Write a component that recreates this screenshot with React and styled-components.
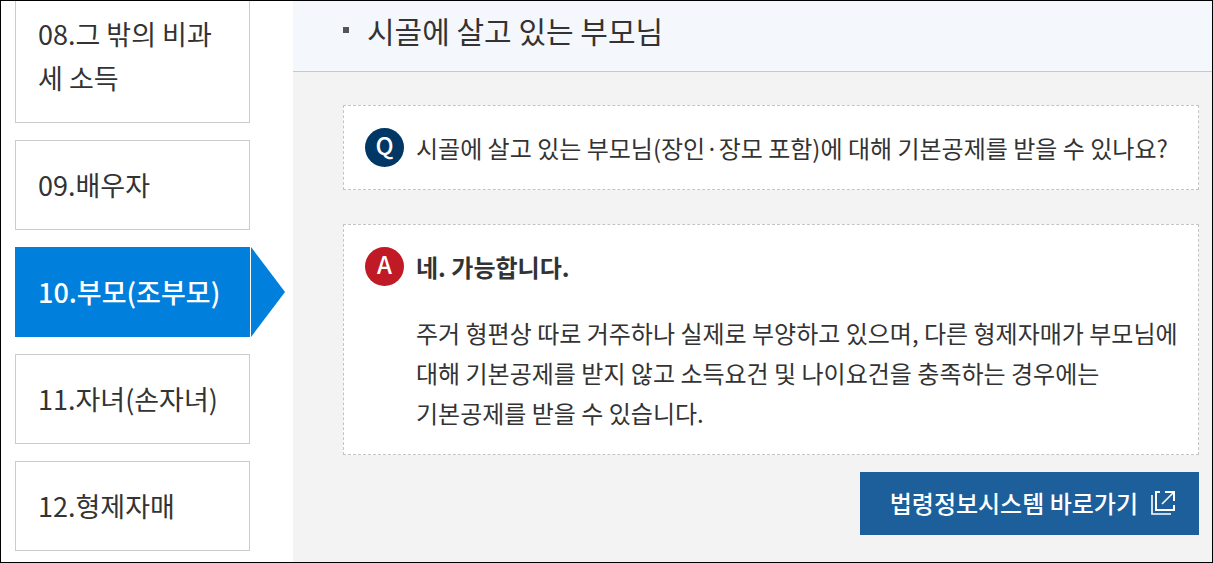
import * as React from 'react'
import styled, { createGlobalStyle, css } from "styled-components";


const GlobalStyle = createGlobalStyle`
    * {
        box-sizing: border-box;
    }

    body {
        margin: 0;
        background-color: #fff;
        color: #333;
        font-family: "Noto Sans CJK KR", "Noto Sans", sans-serif;
    }
`;

const Page = styled.div`
    display: grid;
    grid-template-columns: 292px 1fr;
    min-height: 100vh;
    border: 1px solid #000;
    overflow: hidden;
`;

const Menu = styled.nav`
    padding: 0 43px 10px 14px;
`;

const MenuList = styled.ul`
    display: flex;
    flex-direction: column;
    gap: 17px;
    margin: -12px 0 0;
    padding: 0;
    list-style: none;
`;

const MenuLink = styled.a`
    display: block;
    position: relative;
    padding: 22px;
    border: 1px solid #ccc;
    color: #333;
    font-size: 27px;
    line-height: 44px;
    text-decoration: none;

    ${({ $active }) => $active && css`
        border-color: #0080dc;
        background-color: #0080dc;
        color: #fff;
        font-weight: 500;

        &::after {
            content: "";
            position: absolute;
            top: -1px;
            bottom: -1px;
            left: calc(100% + 2px);
            width: 34px;
            background-color: #0080dc;
            clip-path: polygon(0 0, 100% 50%, 0 100%);
        }
    `}
`;

const Main = styled.main`
    background-color: #f3f3f3;
`;

const Header = styled.header`
    display: flex;
    align-items: center;
    gap: 18px;
    padding: 7px 13px 19px 50px;
    border-bottom: 1px solid #c8c8c8;
    background-color: #f4f7fc;
`;

const Bullet = styled.span`
    width: 6px;
    height: 6px;
    background-color: #555;
`;

const Title = styled.h1`
    margin: 0;
    font-size: 30px;
    font-weight: 400;
    line-height: 44px;
`;

const Content = styled.div`
    display: flex;
    flex-direction: column;
    padding: 33px 13px 24px 50px;
`;

const Card = styled.section`
    display: flex;
    align-items: flex-start;
    gap: 12px;
    padding: 22px 16px 21px 21px;
    border: 1px dashed #c4c4c4;
    background-color: #fff;

    & + & {
        margin-top: 34px;
    }
`;

const Badge = styled.span`
    display: flex;
    flex-shrink: 0;
    align-items: center;
    justify-content: center;
    width: 39px;
    height: 39px;
    padding-bottom: 6px;
    border-radius: 50%;
    background-color: ${({ $color }) => $color};
    color: #fff;
    font-size: 24px;
    font-weight: 500;
`;

const Text = styled.p`
    margin: 0;
    font-size: 24px;
    line-height: 40px;
    word-break: keep-all;
`;

const Answer = styled.div`
    display: flex;
    flex-direction: column;
    gap: 26px;
`;

const Strong = styled.strong`
    font-size: 24px;
    line-height: 40px;
`;

const LawLink = styled.a`
    display: flex;
    align-items: center;
    align-self: flex-end;
    gap: 13px;
    margin-top: 17px;
    padding: 11px 24px 12px 30px;
    background-color: #1c5f9b;
    color: #fff;
    font-size: 24px;
    font-weight: 500;
    line-height: 40px;
    text-decoration: none;
`;

const menu = [
    { id: "08", name: "그 밖의 비과세 소득" },
    { id: "09", name: "배우자" },
    { id: "10", name: "부모(조부모)", active: true },
    { id: "11", name: "자녀(손자녀)" },
    { id: "12", name: "형제자매" },
];

const OpenIcon = () => {
    return (
        <svg width="24" height="24" viewBox="0 0 24 24" fill="none" stroke="#fff" strokeWidth="2" aria-hidden="true">
            <path d="M1 4V23H20" strokeWidth="1.6" />
            <path d="M9 1H5V19H23V14" />
            <path d="M14 1H23V10" />
            <path d="M11 13L22 2" strokeWidth="1.6" />
        </svg>
    )
}

const App = () => {
    return (
        <>
            <GlobalStyle/>
            <Page>
                <Menu>
                    <MenuList>
                        {menu.map((item) => (
                            <li key={item.id}>
                                <MenuLink href="#" $active={item.active} aria-current={item.active ? "page" : undefined}>
                                    {`${item.id}.${item.name}`}
                                </MenuLink>
                            </li>
                        ))}
                    </MenuList>
                </Menu>
                <Main>
                    <Header>
                        <Bullet/>
                        <Title>시골에 살고 있는 부모님</Title>
                    </Header>
                    <Content>
                        <Card>
                            <Badge $color="#003764">Q</Badge>
                            <Text>시골에 살고 있는 부모님(장인·장모 포함)에 대해 기본공제를 받을 수 있나요?</Text>
                        </Card>
                        <Card>
                            <Badge $color="#bf1a25">A</Badge>
                            <Answer>
                                <Strong>네. 가능합니다.</Strong>
                                <Text>
                                    주거 형편상 따로 거주하나 실제로 부양하고 있으며, 다른 형제자매가 부모님에
                                    대해 기본공제를 받지 않고 소득요건 및 나이요건을 충족하는 경우에는
                                    기본공제를 받을 수 있습니다.
                                </Text>
                            </Answer>
                        </Card>
                        <LawLink href="#">
                            법령정보시스템 바로가기
                            <OpenIcon/>
                        </LawLink>
                    </Content>
                </Main>
            </Page>
        </>
    )
}

export default App
